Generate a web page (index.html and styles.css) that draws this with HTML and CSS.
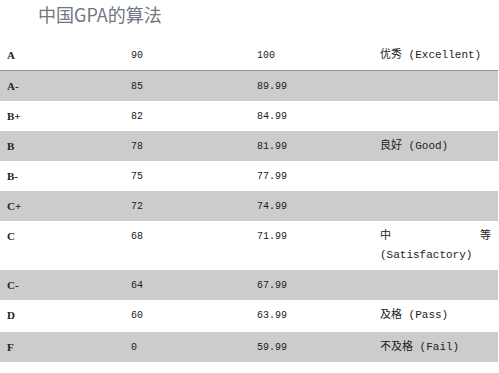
FILE: index.html
```
<!DOCTYPE html>
<html lang="zh-CN">
<head>
    <meta charset="UTF-8">
    <title>中国GPA的算法</title>
    <link rel="stylesheet" href="styles.css">
</head>
<body>
    <h2 class="title">中国GPA的算法</h2>
    <table class="gpa">
        <thead>
            <tr><th>A</th><td>90</td><td>100</td><td class="level">优秀 (Excellent)</td></tr>
        </thead>
        <tbody>
            <tr><th>A-</th><td>85</td><td>89.99</td><td class="level"></td></tr>
            <tr><th>B+</th><td>82</td><td>84.99</td><td class="level"></td></tr>
            <tr><th>B</th><td>78</td><td>81.99</td><td class="level">良好 (Good)</td></tr>
            <tr><th>B-</th><td>75</td><td>77.99</td><td class="level"></td></tr>
            <tr><th>C+</th><td>72</td><td>74.99</td><td class="level"></td></tr>
            <tr><th>C</th><td>68</td><td>71.99</td><td class="level">中等 (Satisfactory)</td></tr>
            <tr><th>C-</th><td>64</td><td>67.99</td><td class="level"></td></tr>
            <tr class="tall"><th>D</th><td>60</td><td>63.99</td><td class="level">及格 (Pass)</td></tr>
            <tr><th>F</th><td>0</td><td>59.99</td><td class="level">不及格 (Fail)</td></tr>
        </tbody>
    </table>
</body>
</html>
```

FILE: styles.css
```
html, body {
    margin: 0;
    background-color: white;
}
.title {
    margin: 2px 0 0 38px;
    height: 38px;
    font-family: "Noto Sans CJK SC", sans-serif;
    font-size: 18px;
    font-weight: normal;
    line-height: 24px;
    color: #6f7782;
}
.gpa {
    width: 498px;
    border-collapse: collapse;
    border-spacing: 0;
    table-layout: fixed;
    font-family: "Liberation Mono", "Noto Sans CJK SC", monospace;
    font-size: 10px;
    color: #222;
}
.gpa th, .gpa td {
    padding: 6px 7px 5px 7px;
    line-height: 19px;
    text-align: left;
    vertical-align: top;
}
.gpa th {
    width: 110px;
    font-family: "Liberation Serif", "Noto Sans CJK SC", serif;
    font-size: 11px;
    font-weight: bold;
}
.gpa td:nth-child(2) {
    width: 112px;
}
.gpa td:nth-child(3) {
    width: 109px;
}
.gpa .level {
    text-align: justify;
    font-size: 11px;
}
.gpa thead tr {
    border-bottom: 1px solid #909090;
}
.gpa tbody tr:nth-child(odd) {
    background-color: #cccccc;
}
.gpa tr.tall th, .gpa tr.tall td {
    padding-bottom: 7px;
}
```
